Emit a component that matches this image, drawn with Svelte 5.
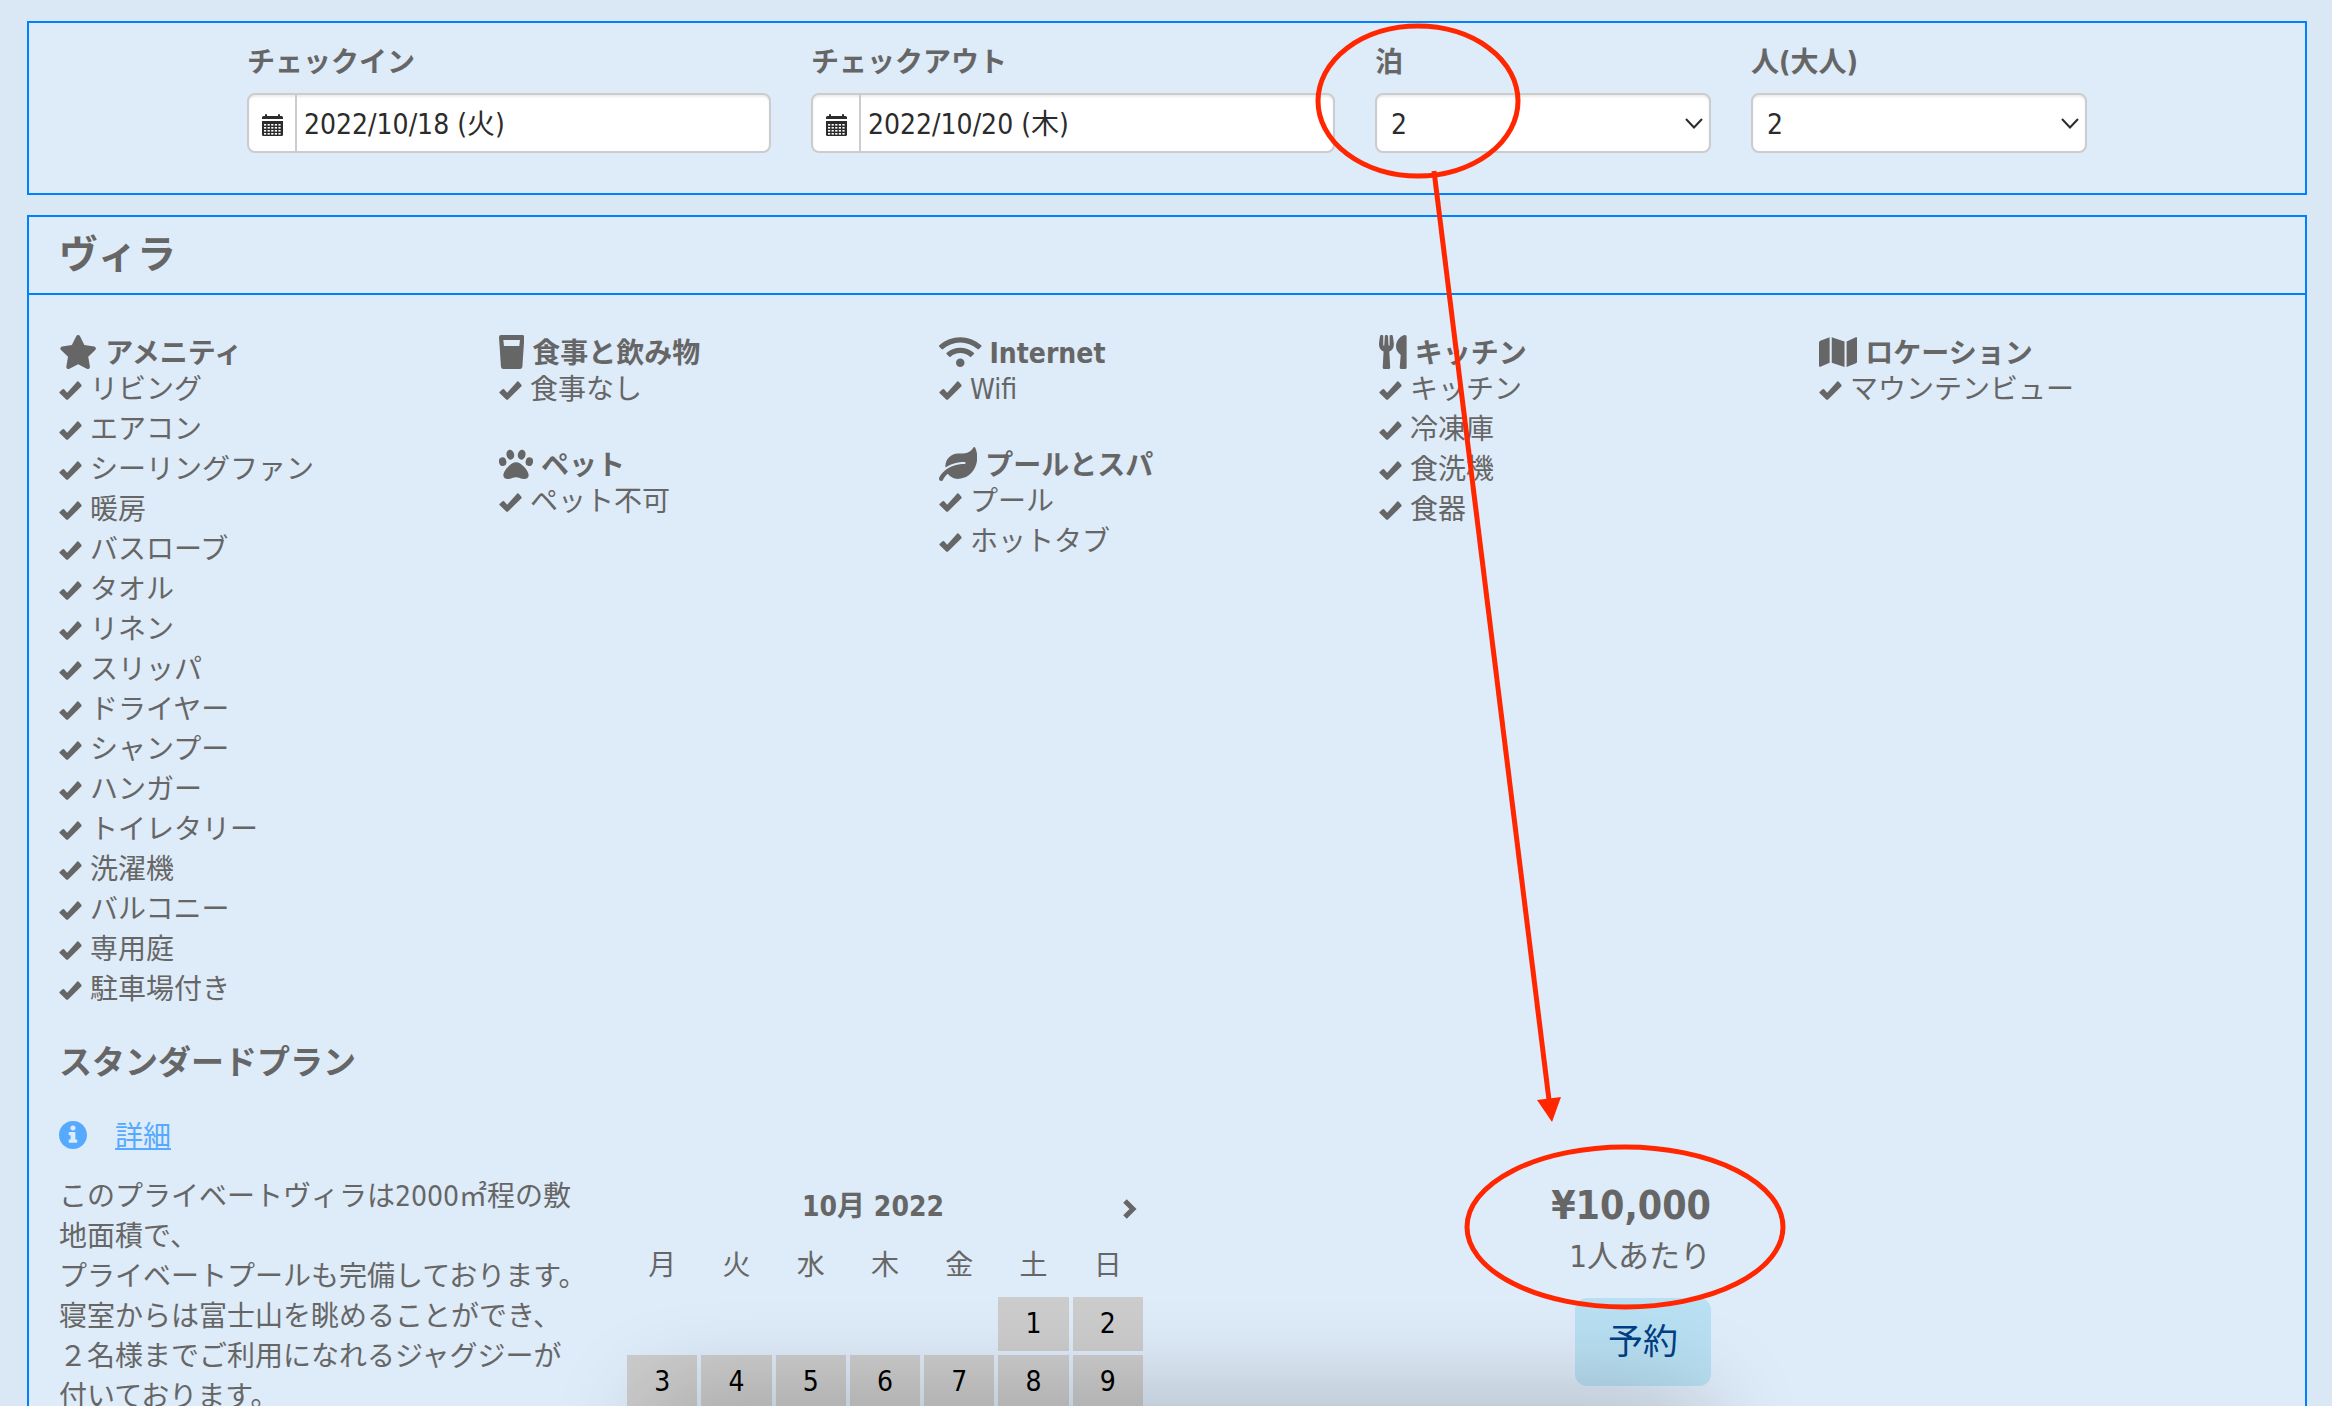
<script lang="ts">
    const icons = {
        star: {w: 576, h: 512, d: "M259.3 17.8L194 150.2 47.9 171.5c-26.2 3.8-36.7 36.1-17.7 54.6l105.7 103-25 145.5c-4.5 26.3 23.2 46 46.4 33.7L288 439.6l130.7 68.7c23.2 12.2 50.9-7.4 46.4-33.7l-25-145.5 105.7-103c19-18.5 8.5-50.8-17.7-54.6L382 150.2 316.7 17.8c-11.7-23.6-45.6-23.9-57.4 0z"},
        glass: {w: 76, h: 102, d: "M6 0H70Q76 0 76 7L70 96Q69 102 63 102H13Q7 102 6 96L0 7Q0 0 6 0zM13 15L15 33H61L63 15z"},
        paw: {w: 102, h: 102, d: "M51 46C35 46 13 71 13 85C13 92 18 96 27 96C37 96 43 91 51 91C59 91 65 96 75 96C84 96 89 92 89 85C89 71 67 46 51 46zM30.9 8.3a11.5 15 -12 1 0 6.2 29.4a11.5 15 -12 1 0 -6.2 -29.4zM7.6 31.4a11 13 -15 1 0 6.8 25.2a11 13 -15 1 0 -6.8 -25.2zM71.1 8.3a11.5 15 12 1 0 -6.2 29.4a11.5 15 12 1 0 6.2 -29.4zM94.4 31.4a11 13 15 1 0 -6.8 25.2a11 13 15 1 0 6.8 -25.2z"},
        wifi: {w: 640, h: 512, d: "M634.91 154.88C457.74-8.99 182.19-8.93 5.09 154.88c-6.66 6.16-6.79 16.59-.35 22.98l34.24 33.97c6.14 6.1 16.02 6.23 22.4.38 145.92-133.68 371.3-133.71 517.25 0 6.38 5.85 16.26 5.71 22.4-.38l34.24-33.97c6.43-6.39 6.3-16.82-.36-22.98zM320 352c-35.35 0-64 28.65-64 64s28.65 64 64 64 64-28.65 64-64-28.65-64-64-64zm202.67-83.59c-115.26-101.93-290.21-101.82-405.34 0-6.9 6.1-7.12 16.69-.57 23.15l34.44 33.99c6 5.92 15.66 6.32 22.05.8 83.95-72.57 209.74-72.41 293.49 0 6.39 5.52 16.05 5.13 22.05-.8l34.44-33.99c6.56-6.46 6.33-17.06-.56-23.15z"},
        leaf: {w: 576, h: 512, d: "M546.2 9.7c-5.6-12.5-21.6-13-28.3-1.2C486.9 62.4 431.4 96 368 96h-80C182 96 96 182 96 288c0 7 .8 13.7 1.5 20.5C161.3 262.8 253.4 224 384 224c8.8 0 16 7.2 16 16s-7.2 16-16 16C132.6 256 26 410.1 2.4 468c-6.6 16.3 1.2 34.9 17.5 41.6 16.4 6.8 35-1.1 41.8-17.3 1.5-3.6 20.9-47.9 71.9-90.6 32.4 43.9 94 85.8 174.9 77.2C465.5 467.5 576 326.7 576 154.3c0-50.2-10.8-102.2-29.8-144.6z"},
        utensils: {w: 416, h: 512, d: "M207.9 15.2c.8 4.7 16.1 94.5 16.1 128.8 0 52.3-27.8 89.6-68.9 104.6L168 486.7c.7 13.7-10.2 25.3-24 25.3H80c-13.7 0-24.7-11.5-24-25.3l12.9-238.1C27.7 233.6 0 196.2 0 144 0 109.6 15.3 19.9 16.1 15.2 19.3-5.1 61.4-5.4 64 16.3v141.2c1.3 3.4 15.1 3.2 16 0 1.4-25.3 7.9-139.2 8-141.8 3.3-20.8 44.7-20.8 47.9 0 .2 2.7 6.6 116.5 8 141.8.9 3.2 14.8 3.4 16 0V16.3c2.6-21.6 44.8-21.4 48-1.1zm119.2 285.7l-15 185.1c-1.2 14 9.9 26 23.9 26h56c13.3 0 24-10.7 24-24V24c0-13.2-10.7-24-24-24-82.5 0-221.4 178.5-64.9 300.9z"},
        map: {w: 576, h: 512, d: "M0 117.66v346.32c0 11.32 11.43 19.06 21.94 14.86L160 416V32L20.12 87.95A32.006 32.006 0 0 0 0 117.66zM192 416l192 64V96L192 32v384zM554.06 33.16L416 96v384l139.88-55.95A31.996 31.996 0 0 0 576 394.34V48.02c0-11.32-11.43-19.06-21.94-14.86z"},
    };

    const columns = [
        [
            {icon: "star", title: "アメニティ", items: ["リビング", "エアコン", "シーリングファン", "暖房", "バスローブ", "タオル", "リネン", "スリッパ", "ドライヤー", "シャンプー", "ハンガー", "トイレタリー", "洗濯機", "バルコニー", "専用庭", "駐車場付き"]},
        ],
        [
            {icon: "glass", title: "食事と飲み物", items: ["食事なし"]},
            {icon: "paw", title: "ペット", items: ["ペット不可"]},
        ],
        [
            {icon: "wifi", title: "Internet", items: ["Wifi"]},
            {icon: "leaf", title: "プールとスパ", items: ["プール", "ホットタブ"]},
        ],
        [
            {icon: "utensils", title: "キッチン", items: ["キッチン", "冷凍庫", "食洗機", "食器"]},
        ],
        [
            {icon: "map", title: "ロケーション", items: ["マウンテンビュー"]},
        ],
    ];

    const weekdays = ["月", "火", "水", "木", "金", "土", "日"];
    const weeks = [
        [null, null, null, null, null, 1, 2],
        [3, 4, 5, 6, 7, 8, 9],
    ];
    const counts = [1, 2, 3, 4];

    let checkin = $state("2022/10/18 (火)");
    let checkout = $state("2022/10/20 (木)");
    let nights = $state(2);
    let adults = $state(2);
</script>

{#snippet calendarIcon()}
    <svg class="calendar-icon" viewBox="0 0 21 22" aria-hidden="true">
        <path d="M0 5V3.500Q0 2 1.500 2H3V1Q3 0 4 0T5 1V2H16V1Q16 0 17 0T18 1V2H19.500Q21 2 21 3.500V5z"/>
        <path d="M0 7H21V20.500Q21 22 19.500 22H1.500Q0 22 0 20.500z"/>
        {#each [10, 13, 16, 19] as y}
            {#each [2, 5.600, 9.200, 12.800, 16.400] as x}
                <rect {x} {y} width="2.200" height="1.600" fill="#fff"/>
            {/each}
        {/each}
    </svg>
{/snippet}

{#snippet caret()}
    <svg class="caret" viewBox="0 0 18 11" aria-hidden="true">
        <path d="M1 1L9 9.500L17 1"/>
    </svg>
{/snippet}

<main class="page">
    <section class="panel">
        <form class="search">
            <div class="field wide">
                <label for="checkin">チェックイン</label>
                <div class="control">
                    <span class="addon">{@render calendarIcon()}</span>
                    <input id="checkin" type="text" bind:value={checkin}/>
                </div>
            </div>
            <div class="field wide">
                <label for="checkout">チェックアウト</label>
                <div class="control">
                    <span class="addon">{@render calendarIcon()}</span>
                    <input id="checkout" type="text" bind:value={checkout}/>
                </div>
            </div>
            <div class="field">
                <label for="nights">泊</label>
                <div class="control">
                    <select id="nights" bind:value={nights}>
                        {#each counts as n}
                            <option value={n}>{n}</option>
                        {/each}
                    </select>
                    {@render caret()}
                </div>
            </div>
            <div class="field">
                <label for="adults">人(大人)</label>
                <div class="control">
                    <select id="adults" bind:value={adults}>
                        {#each counts as n}
                            <option value={n}>{n}</option>
                        {/each}
                    </select>
                    {@render caret()}
                </div>
            </div>
        </form>
    </section>

    <section class="panel room">
        <h1>ヴィラ</h1>
        <div class="amenities">
            {#each columns as groups}
                <div class="column">
                    {#each groups as group}
                        <div class="group">
                            <h3>
                                <svg class="icon" viewBox="0 0 {icons[group.icon].w} {icons[group.icon].h}" aria-hidden="true">
                                    <path d={icons[group.icon].d}/>
                                </svg>
                                <span>{group.title}</span>
                            </h3>
                            <ul>
                                {#each group.items as item}
                                    <li>
                                        <svg class="check" viewBox="0 0 68 57" aria-hidden="true">
                                            <path d="M1 33L11 24Q13 23 15 25L24 35L55 1Q57 0 59 2L67 12Q68 14 67 16L26 56Q24 57 22 56L1 36Q0 34 1 33z"/>
                                        </svg>
                                        {item}
                                    </li>
                                {/each}
                            </ul>
                        </div>
                    {/each}
                </div>
            {/each}
        </div>

        <div class="plan">
            <h2>スタンダードプラン</h2>
            <a class="detail" href="#detail">
                <svg viewBox="8 8 496 496" aria-hidden="true">
                    <path d="M256 8C119.043 8 8 119.083 8 256c0 136.997 111.043 248 248 248s248-111.003 248-248C504 119.083 392.957 8 256 8zm0 80c27 0 46 19 46 44s-19 44-46 44-46-19-46-44 19-44 46-44zm76 292c0 6.627-5.373 12-12 12h-128c-6.627 0-12-5.373-12-12v-34c0-6.627 5.373-12 12-12h22v-72h-22c-6.627 0-12-5.373-12-12v-34c0-6.627 5.373-12 12-12h94c6.627 0 12 5.373 12 12v118h22c6.627 0 12 5.373 12 12v34z"/>
                </svg>
                <span>詳細</span>
            </a>
            <div class="offer">
                <p class="description">
                    このプライベートヴィラは2000㎡程の敷<br/>
                    地面積で、<br/>
                    プライベートプールも完備しております。<br/>
                    寝室からは富士山を眺めることができ、<br/>
                    ２名様までご利用になれるジャグジーが<br/>
                    付いております。
                </p>
                <div class="calendar">
                    <div class="month">
                        <strong>10月 2022</strong>
                        <button type="button" aria-label="次の月">
                            <svg viewBox="0 0 14 20" aria-hidden="true">
                                <path d="M2 2L10 10L2 18"/>
                            </svg>
                        </button>
                    </div>
                    <table>
                        <thead>
                            <tr>
                                {#each weekdays as day}
                                    <th>{day}</th>
                                {/each}
                            </tr>
                        </thead>
                        <tbody>
                            {#each weeks as week}
                                <tr>
                                    {#each week as day}
                                        <td class:day={day}>{day ?? ""}</td>
                                    {/each}
                                </tr>
                            {/each}
                        </tbody>
                    </table>
                </div>
                <div class="booking">
                    <strong>¥10,000</strong>
                    <span>1人あたり</span>
                    <button type="button">予約</button>
                </div>
            </div>
        </div>
    </section>

    <div class="shade"></div>

    <svg class="marks" width="2332" height="1406" aria-hidden="true">
        <ellipse cx="1418" cy="101" rx="100" ry="75"/>
        <path d="M1434 171L1549 1100"/>
        <path class="head" d="M1552 1122L1537 1100L1561 1097z"/>
        <ellipse cx="1625" cy="1227" rx="158" ry="80"/>
    </svg>
</main>

<style>
    :global(body) {
        margin: 0;
        background-color: #dae8f5;
    }
    .page {
        position: relative;
        box-sizing: border-box;
        height: 100vh;
        overflow: hidden;
        padding: 21px 25px 0 27px;
        color: #666;
        font-family: "DejaVu Sans Condensed", "Noto Sans", "Noto Sans CJK JP", sans-serif;
        font-size: 28px;
        line-height: 40px;
    }
    h1, h2, h3, p, ul {
        margin: 0;
        padding: 0;
    }
    input, select, button {
        font: inherit;
    }
    .panel {
        border: 2px solid #0080ff;
        background-color: #deebf8;
    }

    /* search bar */
    .search {
        display: grid;
        grid-template-columns: 3fr 3fr 2fr 2fr;
        margin: 0 198px;
        padding: 20px 0 40px;
    }
    .field {
        padding: 0 20px;
    }
    .field label {
        display: block;
        margin-bottom: 10px;
        font-weight: bold;
    }
    .control {
        position: relative;
        display: flex;
        box-sizing: border-box;
        height: 60px;
        border: 2px solid #ccc;
        border-radius: 8px;
        background-color: #fff;
        box-shadow: inset 0 2px 2px rgba(0, 0, 0, 0.08);
    }
    .addon {
        display: flex;
        align-items: center;
        justify-content: center;
        width: 46px;
        padding-top: 4px;
        border-right: 2px solid #ccc;
    }
    .calendar-icon {
        width: 21px;
        height: 22px;
        fill: #2b2b2b;
    }
    .control input, .control select {
        flex: 1;
        min-width: 0;
        padding: 4px 7px 0;
        border: 0;
        background: none;
        color: #2b2b2b;
        outline: none;
    }
    .control select {
        padding: 4px 14px 0;
        appearance: none;
    }
    .caret {
        position: absolute;
        right: 6px;
        top: 23px;
        width: 18px;
        height: 11px;
        fill: none;
        stroke: #2b2b2b;
        stroke-width: 2;
        pointer-events: none;
    }

    /* room */
    .room {
        margin-top: 20px;
    }
    h1 {
        padding: 14px 30px;
        border-bottom: 2px solid #0080ff;
        font-size: 39px;
        line-height: 48px;
    }
    .amenities {
        display: grid;
        grid-template-columns: repeat(5, 1fr);
        padding: 39px 46px 0 30px;
    }
    .group {
        margin-bottom: 36px;
    }
    h3 {
        display: flex;
        align-items: center;
        gap: 8px;
        font-size: 28px;
        line-height: 32px;
    }
    h3 span {
        padding-top: 4px;
    }
    .icon {
        height: 34px;
        fill: #666;
        fill-rule: evenodd;
    }
    ul {
        list-style: none;
    }
    li {
        display: flex;
        align-items: center;
        gap: 8px;
    }
    .check {
        width: 23px;
        height: 19px;
        fill: #666;
    }

    /* plan */
    .plan {
        padding: 0 30px 30px;
    }
    h2 {
        margin-bottom: 37px;
        font-size: 33px;
        line-height: 34px;
    }
    .detail {
        display: flex;
        align-items: flex-start;
        gap: 28px;
        color: #55aaff;
    }
    .detail svg {
        width: 28px;
        height: 28px;
        margin-top: 4px;
        fill: #55aaff;
    }
    .offer {
        display: flex;
        align-items: flex-start;
        margin-top: 20px;
    }
    .description {
        width: 564px;
        white-space: nowrap;
    }
    .calendar {
        width: 524px;
        margin-top: 10px;
    }
    .month {
        display: flex;
        align-items: center;
        padding-right: 10px;
    }
    .month strong {
        flex: 1;
        text-align: center;
    }
    .month button {
        display: flex;
        padding: 4px 0 0;
        border: 0;
        background: none;
        cursor: pointer;
    }
    .month svg {
        width: 14px;
        height: 20px;
        fill: none;
        stroke: #666;
        stroke-width: 5;
    }
    table {
        width: 100%;
        table-layout: fixed;
        border-spacing: 4px;
    }
    th, td {
        padding: 0;
        text-align: center;
    }
    th {
        height: 54px;
        padding-top: 8px;
        font-weight: normal;
    }
    td {
        height: 54px;
    }
    .day {
        background-color: #ccc;
        color: #000;
        cursor: pointer;
    }
    .booking {
        display: flex;
        flex-direction: column;
        align-items: flex-end;
        width: 564px;
        margin-top: 5px;
    }
    .booking strong {
        font-size: 39px;
        line-height: 48px;
    }
    .booking span {
        margin: 4px 0 20px;
        font-size: 31px;
        line-height: 44px;
    }
    .booking button {
        width: 136px;
        height: 88px;
        border: 0;
        border-radius: 12px;
        background-color: #b8dff2;
        color: #004085;
        font-size: 35px;
        cursor: pointer;
    }

    .shade {
        position: absolute;
        left: 28%;
        right: 27%;
        bottom: -60px;
        height: 60px;
        box-shadow: 0 0 100px rgba(0, 0, 0, 0.3);
        pointer-events: none;
    }
    .marks {
        position: absolute;
        left: 0;
        top: 0;
        fill: none;
        stroke: #ff2600;
        stroke-width: 5;
        pointer-events: none;
    }
    .head {
        fill: #ff2600;
        stroke: none;
    }
</style>
